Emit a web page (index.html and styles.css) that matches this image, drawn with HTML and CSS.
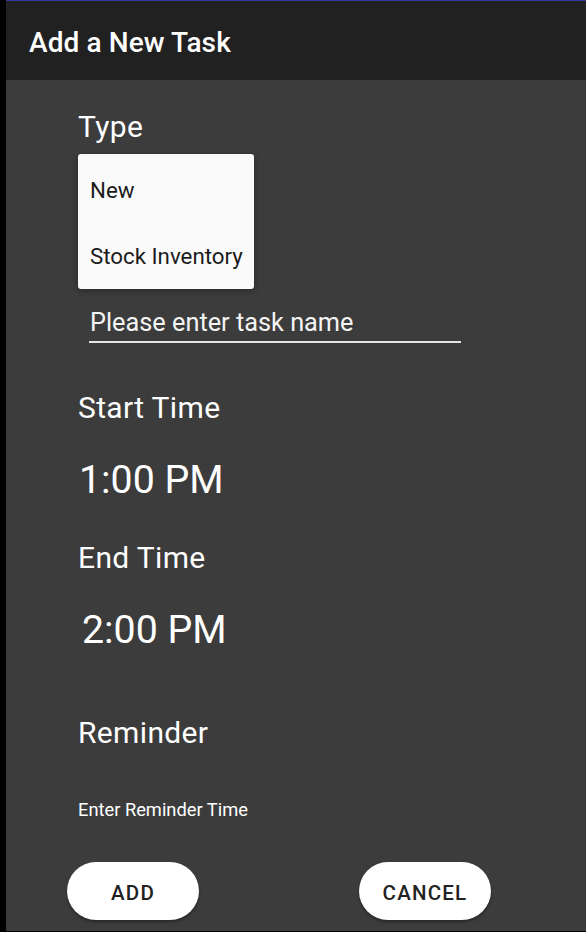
FILE: index.html
```html
<!DOCTYPE html>
<html>
<head>
<meta charset="utf-8">
<link rel="stylesheet" href="styles.css">
</head>
<body>
<div class="app">
  <div class="topline"></div>
  <header class="appbar">Add a New Task</header>
  <main class="form">
    <div class="label type-label">Type</div>
    <div class="spinner-space"></div>
    <div class="input">Please enter task name</div>
    <div class="label start-label">Start Time</div>
    <div class="time">1:00 PM</div>
    <div class="label end-label">End Time</div>
    <div class="time time-end">2:00 PM</div>
    <div class="label reminder-label">Reminder</div>
    <div class="hint">Enter Reminder Time</div>
    <div class="buttons">
      <button class="btn">ADD</button>
      <button class="btn">CANCEL</button>
    </div>
    <div class="menu">
      <div class="menu-item">New</div>
      <div class="menu-item">Stock Inventory</div>
    </div>
  </main>
</div>
</body>
</html>
```

FILE: styles.css
```css
html, body {
  margin: 0;
  padding: 0;
  background: #000;
  height: 932px;
  overflow: hidden;
}

.app {
  margin-left: 6px;
  height: 931px;
  display: flex;
  flex-direction: column;
  background: #3c3c3c;
  font-family: Roboto, "Liberation Sans", sans-serif;
  color: #fff;
}

.topline {
  height: 1px;
  background: #2f3a9e;
}

.appbar {
  height: 75px;
  padding-top: 4px;
  line-height: 75px;
  padding-left: 23px;
  background: #212121;
  font-size: 28px;
  font-weight: 500;
  letter-spacing: 0.1px;
  color: #fff;
}

.form {
  position: relative;
  flex: 1;
  padding: 29px 0 0 72px;
  display: flex;
  flex-direction: column;
  align-items: flex-start;
}

.label {
  font-size: 30px;
  letter-spacing: 0.35px;
  line-height: 36px;
}

.spinner-space {
  height: 160px;
}

.input {
  margin-left: 11px;
  width: 371px;
  padding-left: 1px;
  font-size: 25.3px;
  line-height: 36px;
  border-bottom: 2px solid #e6e6e6;
  color: #f4f4f4;
}

.start-label { margin-top: 47px; }

.time {
  margin-top: 31px;
  font-size: 39.3px;
  line-height: 46px;
  padding-left: 1px;
}

.time-end { padding-left: 4px; }

.end-label { margin-top: 37px; }

.reminder-label { margin-top: 62px; }

.hint {
  margin-top: 47px;
  font-size: 18.3px;
  line-height: 24px;
}

.buttons {
  margin-top: 40px;
  margin-left: -11px;
  display: flex;
  gap: 160px;
}

.btn {
  width: 132px;
  height: 58px;
  border: none;
  border-radius: 29px;
  background: #fff;
  color: #222;
  font-family: Roboto, "Liberation Sans", sans-serif;
  font-size: 20.5px;
  font-weight: 500;
  letter-spacing: 1.2px;
  box-shadow: 0 2px 3px rgba(0, 0, 0, 0.35);
  padding: 3px 0 0;
}

.menu {
  position: absolute;
  top: 74px;
  left: 72px;
  width: 176px;
  height: 132px;
  padding-top: 3px;
  background: #fafafa;
  border-radius: 3px;
  box-shadow: 0 2px 6px rgba(0, 0, 0, 0.35);
}

.menu-item {
  height: 66px;
  line-height: 66px;
  padding-left: 12px;
  font-size: 22.3px;
  color: #1a1a1a;
  white-space: nowrap;
}
```
